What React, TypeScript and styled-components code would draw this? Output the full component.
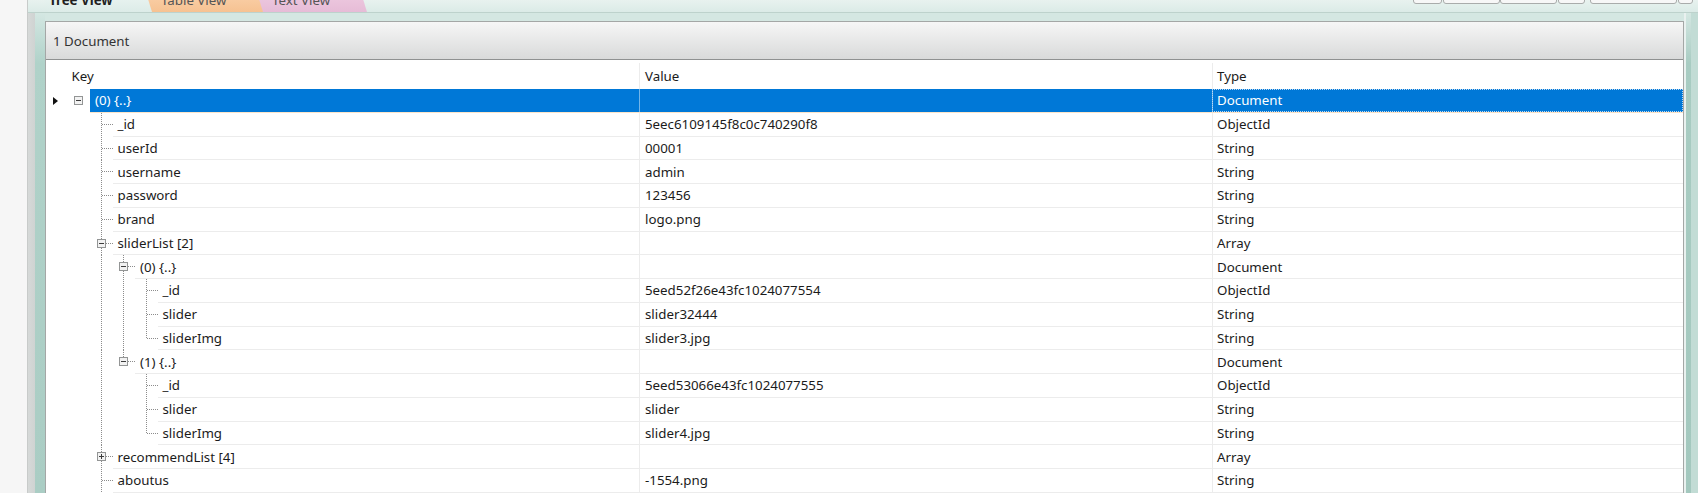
import * as React from "react";
import styled, { createGlobalStyle } from "styled-components";

const ROW_H = 23.76;
const INDENT = 22.5;

const GlobalStyle = createGlobalStyle`
  html, body {
    margin: 0;
    padding: 0;
    background: #f5f5f5;
  }
  body {
    font-family: "Noto Sans", "Segoe UI", sans-serif;
    font-size: 13.3px;
    color: #1b1b1b;
    overflow: hidden;
  }
`;

const SWindow = styled.div`
  display: flex;
  height: 493px;
  overflow: hidden;
`;

const SGutter = styled.div`
  width: 27px;
  flex: none;
  background: #f6f6f6;
  border-right: 1px solid #c8cbca;
`;

const SMain = styled.div`
  flex: 1;
  min-width: 0;
  display: flex;
  flex-direction: column;
  background: #d4e7e2;
`;

const STopBar = styled.div`
  height: 13px;
  flex: none;
  box-sizing: border-box;
  display: flex;
  justify-content: space-between;
  padding-left: 12px;
  background: linear-gradient(#e8f2ef, #dbebe7);
  border-bottom: 1px solid #bdd2cc;
`;

const STabs = styled.div`
  display: flex;
  align-self: flex-end;
`;

const STab = styled.div<{ $tone: "active" | "orange" | "pink"; $w: number }>`
  flex: none;
  width: ${p => p.$w}px;
  height: 26px;
  line-height: 28px;
  overflow: hidden;
  box-sizing: border-box;
  padding-left: ${p => (p.$tone === "active" ? 9 : 17)}px;
  margin-left: ${p => (p.$tone === "active" ? 0 : -9)}px;
  font-weight: ${p => (p.$tone === "active" ? 700 : 400)};
  color: ${p => (p.$tone === "active" ? "#1f1f1f" : "#555")};
  white-space: nowrap;
  clip-path: polygon(0 0, calc(100% - 8px) 0, 100% 100%, 8px 100%);
  background: ${p =>
    p.$tone === "orange"
      ? "linear-gradient(#fbd6b2, #f6c292)"
      : p.$tone === "pink"
      ? "linear-gradient(#f1cfe4, #e6bcd7)"
      : "linear-gradient(#f2f8f6, #dcece8)"};
`;

const SToolbar = styled.div`
  display: flex;
  align-self: flex-start;
  margin-top: -16px;
  margin-right: 5px;
`;

const SToolButton = styled.div<{ $w: number; $gap: number }>`
  width: ${p => p.$w}px;
  height: 20px;
  margin-left: ${p => p.$gap}px;
  box-sizing: border-box;
  border: 1px solid #a9acab;
  border-radius: 0 0 3px 3px;
  background: #f7f7f7;
`;

const SBody = styled.div`
  flex: 1;
  min-height: 0;
  display: flex;
`;

const SLeftRail = styled.div`
  width: 17px;
  flex: none;
  background: linear-gradient(90deg, #d6d9d8 0, #cfd3d2 7px, transparent 7px),
    linear-gradient(#d4e7e2, #b0d2c9 50px, #aacdc4);
`;

const SRightRail = styled.div`
  width: 14px;
  flex: none;
  background: linear-gradient(90deg, #e9f1ef 0, #e9f1ef 2px, transparent 2px, transparent 7px, #c2dcd5 7px),
    linear-gradient(#d4e7e2, #a8ccc2 50px, #a3c8be);
`;

const SCenter = styled.div`
  flex: 1;
  min-width: 0;
  display: flex;
  flex-direction: column;
  padding-top: 8px;
`;

const SPanel = styled.div`
  flex: 1;
  min-height: 0;
  display: flex;
  flex-direction: column;
  border: 1px solid #a4a7a6;
  border-bottom: none;
  background: #fff;
  overflow: hidden;
`;

const SPanelHeader = styled.div`
  height: 38px;
  flex: none;
  box-sizing: border-box;
  display: flex;
  align-items: center;
  padding-left: 7px;
  color: #333;
  background: linear-gradient(#f6f6f6, #d9dada);
  border-bottom: 1px solid #8f9191;
`;

const SHeadRow = styled.div`
  display: grid;
  grid-template-columns: 21px 572px 573px 1fr;
  height: 29px;
  flex: none;
  box-sizing: border-box;
  padding-top: 3px;
`;

const SHeadCell = styled.div<{ $pad: number; $sep?: boolean }>`
  display: flex;
  align-items: center;
  padding-left: ${p => p.$pad}px;
  border-left: ${p => (p.$sep ? "1px solid #ececec" : "none")};
`;

const SRow = styled.div`
  display: flex;
  height: ${ROW_H}px;
  flex: none;
`;

const SRowHeader = styled.div`
  width: 21px;
  flex: none;
  display: flex;
  align-items: center;
`;

const STriangle = styled.div`
  width: 0;
  height: 0;
  margin-left: 7px;
  border-left: 5px solid #111;
  border-top: 4px solid transparent;
  border-bottom: 4px solid transparent;
`;

const STreeSvg = styled.svg`
  flex: none;
  display: block;
  height: 100%;
`;

const SRowBody = styled.div<{ $level: number; $selected?: boolean }>`
  flex: 1;
  min-width: 0;
  display: grid;
  grid-template-columns: ${p => 549 - INDENT * p.$level}px 573px 1fr;
  box-sizing: border-box;
  border-bottom: 1px solid ${p => (p.$selected ? "#fbe4c9" : "#ececec")};
  background: ${p => (p.$selected ? "#0078d7" : "#fff")};
  color: ${p => (p.$selected ? "#fff" : "#1b1b1b")};
`;

const SCell = styled.div<{ $pad: number; $sep?: boolean; $selected?: boolean; $focus?: boolean }>`
  display: flex;
  align-items: center;
  min-width: 0;
  overflow: hidden;
  white-space: nowrap;
  padding-left: ${p => p.$pad}px;
  border-left: ${p =>
    p.$sep ? `1px solid ${p.$selected ? "rgba(255,255,255,0.45)" : "#ececec"}` : "none"};
  outline: ${p => (p.$focus ? "1px dotted #bcd9f4" : "none")};
  outline-offset: -1px;
`;

type Node = {
  key: string;
  value?: string;
  type: string;
  children?: Node[];
  collapsed?: boolean;
  more?: boolean;
};

const doc: Node = {
  key: "(0) {..}",
  type: "Document",
  more: true,
  children: [
    { key: "_id", value: "5eec6109145f8c0c740290f8", type: "ObjectId" },
    { key: "userId", value: "00001", type: "String" },
    { key: "username", value: "admin", type: "String" },
    { key: "password", value: "123456", type: "String" },
    { key: "brand", value: "logo.png", type: "String" },
    {
      key: "sliderList [2]",
      type: "Array",
      children: [
        {
          key: "(0) {..}",
          type: "Document",
          children: [
            { key: "_id", value: "5eed52f26e43fc1024077554", type: "ObjectId" },
            { key: "slider", value: "slider32444", type: "String" },
            { key: "sliderImg", value: "slider3.jpg", type: "String" },
          ],
        },
        {
          key: "(1) {..}",
          type: "Document",
          children: [
            { key: "_id", value: "5eed53066e43fc1024077555", type: "ObjectId" },
            { key: "slider", value: "slider", type: "String" },
            { key: "sliderImg", value: "slider4.jpg", type: "String" },
          ],
        },
      ],
    },
    { key: "recommendList [4]", type: "Array", collapsed: true, children: [] },
    { key: "aboutus", value: "-1554.png", type: "String" },
  ],
};

interface FlatRow {
  node: Node;
  level: number;
  last: boolean;
  rails: boolean[];
}

const flatten = (node: Node, level: number, last: boolean, rails: boolean[], out: FlatRow[]) => {
  out.push({ node, level, last, rails });
  if (node.children && !node.collapsed) {
    const kids = node.children;
    const nextRails = level >= 1 ? [...rails, !last] : rails;
    kids.forEach((kid, i) =>
      flatten(kid, level + 1, i === kids.length - 1 && !node.more, nextRails, out),
    );
  }
};

const rows: FlatRow[] = [];
flatten(doc, 0, true, [], rows);

const cx = (level: number) => 11.5 + Math.round(INDENT * level);
const MID = 11.5;
const DOT = { stroke: "#8c8c8c", strokeWidth: 1, strokeDasharray: "1 1" };

const TreeLines = ({ row }: { row: FlatRow }) => {
  const { node, level, last, rails } = row;
  const width = 23 + INDENT * level;
  const x = cx(level);
  const expandable = !!node.children;
  return (
    <STreeSvg width={width} shapeRendering="crispEdges">
      {rails.map((on, i) =>
        on ? <line key={i} x1={cx(i + 1)} x2={cx(i + 1)} y1={0} y2="100%" {...DOT} /> : null,
      )}
      {level >= 1 ? (
        <React.Fragment>
          <line x1={x} x2={x} y1={0} y2={last ? MID : "100%"} {...DOT} />
          <line x1={x} x2={x + 11} y1={MID} y2={MID} {...DOT} />
        </React.Fragment>
      ) : null}
      {expandable ? (
        <React.Fragment>
          <rect x={x - 4} y={MID - 4} width={8} height={8} rx={1} fill="#f2f2f2" stroke="#939595" />
          <line x1={x - 2.5} x2={x + 2.5} y1={MID} y2={MID} stroke="#3c3c3c" />
          {node.collapsed ? <line x1={x} x2={x} y1={MID - 2.5} y2={MID + 2.5} stroke="#3c3c3c" /> : null}
        </React.Fragment>
      ) : null}
    </STreeSvg>
  );
};

const toolButtons = [
  { w: 29, gap: 0 },
  { w: 57, gap: 1 },
  { w: 57, gap: 0 },
  { w: 27, gap: 1 },
  { w: 87, gap: 5 },
  { w: 15, gap: 1 },
];

const App = () => {
  return (
    <SWindow>
      <GlobalStyle />
      <SGutter />
      <SMain>
        <STopBar>
          <STabs>
            <STab $tone="active" $w={113}>{"Tree View"}</STab>
            <STab $tone="orange" $w={120}>{"Table View"}</STab>
            <STab $tone="pink" $w={112}>{"Text View"}</STab>
          </STabs>
          <SToolbar>
            {toolButtons.map((b, i) => (
              <SToolButton key={`tool:${i}`} $w={b.w} $gap={b.gap} />
            ))}
          </SToolbar>
        </STopBar>
        <SBody>
          <SLeftRail />
          <SCenter>
            <SPanel>
              <SPanelHeader>{"1 Document"}</SPanelHeader>
              <SHeadRow>
                <div />
                <SHeadCell $pad={4.5}>{"Key"}</SHeadCell>
                <SHeadCell $pad={5} $sep>{"Value"}</SHeadCell>
                <SHeadCell $pad={4} $sep>{"Type"}</SHeadCell>
              </SHeadRow>
              {rows.map((row, i) => {
                const selected = i === 0;
                return (
                  <SRow key={`row:${i}`}>
                    <SRowHeader>{selected ? <STriangle /> : null}</SRowHeader>
                    <TreeLines row={row} />
                    <SRowBody $level={row.level} $selected={selected}>
                      <SCell $pad={5}>{row.node.key}</SCell>
                      <SCell $pad={5} $sep $selected={selected}>{row.node.value || ""}</SCell>
                      <SCell $pad={4} $sep $selected={selected} $focus={selected}>
                        {row.node.type}
                      </SCell>
                    </SRowBody>
                  </SRow>
                );
              })}
            </SPanel>
          </SCenter>
          <SRightRail />
        </SBody>
      </SMain>
    </SWindow>
  );
};

export default App;
